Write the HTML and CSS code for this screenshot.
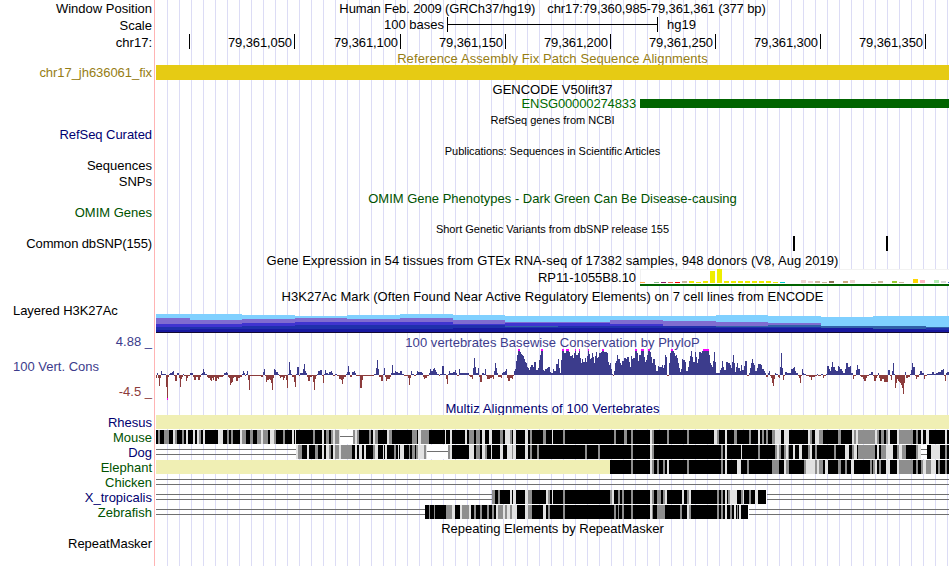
FILE: index.html
```html
<!DOCTYPE html>
<html lang="en">
<head>
<meta charset="utf-8">
<title>Human chr17:79,360,985-79,361,361</title>
<link rel="stylesheet" href="styles.css">
</head>
<body>
<main class="browser">
  <div class="row h17"><span class="label">Window Position</span><div class="track title position"><span>Human Feb. 2009 (GRCh37/hg19)</span><span>chr17:79,360,985-79,361,361 (377 bp)</span></div></div>
  <div class="row h17"><span class="label">Scale</span><div class="track scale"><span>100 bases</span><i class="ruler"></i><span>hg19</span></div></div>
  <div class="row h17"><span class="label">chr17:</span><div class="track ticks"><span class="tick first"></span><span class="tick">79,361,050</span><span class="tick wide">79,361,100</span><span class="tick">79,361,150</span><span class="tick">79,361,200</span><span class="tick">79,361,250</span><span class="tick">79,361,300</span><span class="tick">79,361,350</span></div></div>
  <div class="row h14 gold"><div class="track title wider">Reference Assembly Fix Patch Sequence Alignments</div></div>
  <div class="row h15 gold"><span class="label tight">chr17_jh636061_fix</span><div class="track fill-gold"></div></div>
  <div class="row h18"><div class="track title">GENCODE V50lift37</div></div>
  <div class="row h11 green"><div class="track gene"><span class="tighter">ENSG00000274833</span><i class="gene-bar"></i></div></div>
  <div class="row h15 after-gene"><div class="track title small">RefSeq genes from NCBI</div></div>
  <div class="row h13 navy"><span class="label tight">RefSeq Curated</span></div>
  <div class="row h18 lowered"><div class="track title small tight">Publications: Sequences in Scientific Articles</div></div>
  <div class="row h13"><span class="label">Sequences</span></div>
  <div class="row h19"><span class="label">SNPs</span></div>
  <div class="row h15 omim"><div class="track title">OMIM Gene Phenotypes - Dark Green Can Be Disease-causing</div></div>
  <div class="row h13 omim"><span class="label">OMIM Genes</span></div>
  <div class="row h17 lowered"><div class="track title small">Short Genetic Variants from dbSNP release 155</div></div>
  <div class="row h15"><span class="label tighter">Common dbSNP(155)</span><div class="track"><svg viewBox="0 0 793 15"><path d="M637 0h2v15h-2zM730 0h2v15h-2z"/></svg></div></div>
  <div class="row h18"><div class="track title wide-text">Gene Expression in 54 tissues from GTEx RNA-seq of 17382 samples, 948 donors (V8, Aug 2019)</div></div>
  <div class="row h17"><div class="track gene"><span class="tight">RP11-1055B8.10</span><svg id="gtex" class="gtex" viewBox="0 0 309 17"></svg></div></div>
  <div class="row h18 lowered"><div class="track title wide-text">H3K27Ac Mark (Often Found Near Active Regulatory Elements) on 7 cell lines from ENCODE</div></div>
  <div class="row h29"><span class="label left tight">Layered H3K27Ac</span><div class="track"><svg id="histone" viewBox="0 0 793 29"></svg></div></div>
  <div class="row h16 cons"><span class="label">4.88 _</span><div class="track title lowered wide-text">100 vertebrates Basewise Conservation by PhyloP</div></div>
  <div class="row h52 cons"><div class="label stack"><span class="name">100 Vert. Cons</span><span class="low">-4.5 _</span></div><div class="track"><svg id="phylop" viewBox="0 147 2379 156"></svg></div></div>
  <div class="row h14 navy"><div class="track title wider">Multiz Alignments of 100 Vertebrates</div></div>
  <div id="species"></div>
  <div class="row h17"><div class="track title">Repeating Elements by RepeatMasker</div></div>
  <div class="row h12"><span class="label tight">RepeatMasker</span></div>
</main>
<script src="tracks.js"></script>
</body>
</html>
```
FILE: styles.css
```css
* { box-sizing: border-box; }
body { margin: 0; background: #fff; }
.browser {
  width: 949px; height: 566px; overflow: hidden;
  font: 13px/15px "Liberation Sans", Arial, sans-serif; color: #000;
  background:
    linear-gradient(#ffb4b4, #ffb4b4) 154px 0 / 1px 100% no-repeat,
    repeating-linear-gradient(to right, #dcdcf5 0 1px, transparent 1px 12px) 167px 0 no-repeat;
}
.row { display: grid; grid-template-columns: 152px 793px; grid-template-rows: 100%; column-gap: 4px; align-items: center; white-space: nowrap; }
.label { grid-column: 1; justify-self: end; }
.label.left { justify-self: start; margin-left: 13px; align-self: start; line-height: 13px; }
.track { grid-column: 2; height: 100%; min-width: 0; }
.title { display: flex; justify-content: center; align-items: center; }
.small { font-size: 11px; }
.tight { letter-spacing: -0.05px; }
.tighter { letter-spacing: -0.13px; }
.wide-text { letter-spacing: 0.05px; }
.wider { letter-spacing: 0.09px; }
.h11 { height: 11px; }
.h12 { height: 12px; }
.h13 { height: 13px; }
.h14 { height: 14px; }
.h15 { height: 15px; }
.h16 { height: 16px; }
.h17 { height: 17px; }
.h18 { height: 18px; }
.h19 { height: 19px; }
.h29 { height: 29px; }
.h52 { height: 52px; }
.after-gene { margin-top: 4px; }
.lowered { padding-top: 3px; }
.gold { color: #967d14; }
.green { color: #006a00; }
.omim { color: #005200; }
.navy { color: #000070; }
.cons { color: #3c3c8c; }
.fill-gold { background: #e6cb14; }
.position { gap: 12px; letter-spacing: -0.12px; }
.scale { display: flex; align-items: flex-start; padding-left: 228px; }
.ruler { width: 211px; height: 15px; margin: 0 9px 0 3px; border: solid #000; border-width: 0 1px; background: linear-gradient(#000, #000) 0 7px / 100% 1px no-repeat; }
.ticks { display: flex; align-items: flex-start; }
.tick { width: 105px; height: 15px; border-right: 1px solid #000; text-align: right; padding-right: 2px; line-height: 17px; letter-spacing: -0.1px; }
.tick.first { width: 34px; }
.tick.wide { width: 106px; }
.gene { display: flex; align-items: center; }
.gene span { width: 480px; margin-right: 4px; text-align: right; }
.gene-bar { width: 309px; height: 9px; background: #006400; }
svg { display: block; width: 100%; height: 100%; shape-rendering: crispEdges; }
.gtex { width: 309px; flex: none; }
.stack { justify-self: stretch; height: 100%; display: flex; flex-direction: column; justify-content: space-between; padding: 10px 0 2px; }
.name { margin-left: 13px; }
.low { text-align: right; color: #8c3c3c; }
.axis { fill: #707070; }
.gray { fill: #8e8e8e; }
.light { fill: #e2e2e2; }
.cream { fill: #f0efb4; }
.blank { fill: #fff; }
```
FILE: tracks.js
```js
const rect = (x, y, w, h, paint) => `<rect x="${x}" y="${y}" width="${w}" height="${h}" ${paint}/>`;
const put = (id, markup) => { document.getElementById(id).innerHTML = markup; };

// Tissue expression: offset, height, colour
const Y = '#eeee00';
const tissues = [[0,1,'#ffa54f'],[14,1,'#8fbc8f'],[21,1,'#8b1c62'],[28,1,'#ee6a50'],[35,1,'#ff0000'],[42,2,'#cdb79e'],
  [49,2,Y],[56,1,Y],[63,2,Y],[70,12,Y],[77,14,Y],[84,2,Y],[91,2,Y],[98,2,Y],[105,2,Y],[112,2,Y],[119,2,Y],[126,2,Y],[133,1,Y],
  [140,1,'#00cdcd'],[161,3,'#eed5d2'],[168,2,'#eed5d2'],[175,2,'#cdb79e'],[182,1,'#cdb79e'],[189,2,'#8b7355'],
  [203,2,'#cdaa7d'],[210,3,'#eed5d2'],[231,1,'#cdb79e'],[238,2,'#cdb79e'],[252,2,'#9acd32'],[259,1,'#cdb79e'],
  [273,4,'#ffd700'],[280,3,'#ffb6c1'],[294,3,'#b4eeb4'],[301,2,'#d9d9d9'],[308,1,'#3a5fcd']];
put('gtex', rect(0, 0, 309, 15, 'fill="#fff"') + rect(0, 0, 309, 1, 'fill="#f2f2f2"') + rect(0, 0, 1, 15, 'fill="#f2f2f2"') +
  tissues.map(([x, h, c]) => rect(x, 14 - h, 5, h, `fill="${c}"`)).join('') + rect(0, 15, 309, 2, 'fill="#006400"'));

// Layered marks: segment end, then top of each layer
const layerColors = ['#80d0ff', '#806cd0', '#4034d0', '#3060a8', '#2030ac', '#1818a0'];
const marks = [
  [34,10,14,20,23,23,26],[86,10,16,20,23,23,25],[139,11,15,19,22,22,25],[191,12,14,18,21,21,25],[244,11,15,18,21,21,25],
  [297,10,14,18,21,21,25],[349,11,16,20,21,21,24],[402,12,18,19,22,23,24],[454,12,18,19,22,22,24],[507,12,16,20,22,22,24],
  [560,12,17,22,22,22,24],[612,11,18,22,22,23,24],[665,12,19,21,21,23,24],[717,13,22,22,22,24,24],[770,12,22,22,22,25,25],[793,12,23,23,23,24,26]];
let left = 0;
put('histone', marks.map(([end, ...tops]) => {
  const s = tops.map((t, i) => rect(left, t, end - left, 28 - t, `fill="${layerColors[i]}"`)).join('');
  left = end;
  return s;
}).join('') + rect(0, 28, 793, 1, 'fill="#140a32"'));

// Conservation scores: "position:score", each value holds until the next position
const scores = [
[-18, '18:-10 21:5 24:-10 27:-33 30:-10 33:12 36:3 48:-35 51:-72 54:-6 57:4 60:5 66:8 69:12 72:-3 75:-17 81:5 87:-10 90:-36 93:-12 96:-5 99:3 102:-3 108:-17 111:-8 114:-3 120:6 129:-6 132:-14 138:-6 144:-14 150:-6 153:3 156:6 159:18 162:10 165:4 168:3 171:-5 174:-9 180:-14 183:-18 186:-10 189:-14 192:-6 195:-18 201:-10 204:-12 207:-6 219:-3 222:6 228:9 231:5 234:-5 237:-10 240:-30 243:-23 246:-20 249:-10 252:-6 258:-18 264:-8 270:-5 276:4 279:12 282:5 285:-3 288:4 291:12 294:-15 297:-45 300:-3 333:-5 339:8 342:18 345:-3 348:-20 351:-14 354:-16 357:-12 360:-14 363:-24 366:-45 369:-10 372:18 375:15 378:8 384:3 387:-3 390:-8 393:-6 399:-15 402:-8 405:-3 408:-15 411:-39 414:4 417:39 420:15 423:2 426:-6 432:-20 435:-35 438:4 441:24 447:-3 450:5 456:5 459:18 462:33 465:12 468:6 471:-6 474:-18 480:-6 486:-3 489:-20 492:-45 495:-12 498:-4 501:4 504:12 510:15 516:-3 519:-24 522:2 525:15 528:5 534:3 537:10 543:12 546:5 549:-3 555:2 561:-3 567:-12 573:-14 576:-27 579:-12 582:-6 588:4 591:9 594:27 597:10 600:-5 605:9 612:12 615:6 618:-3 630:-39 636:-14 639:-3 672:4 678:20 681:45 684:18 687:-6 693:-18 699:3 702:22 705:-6 708:-18 711:-12 720:-6 723:6 726:30 729:6 735:12 738:8 744:6 750:12 756:3 762:-3 774:-9 777:-30 780:0'],
[762, '0:-8 3:12 6:3 12:-3 18:4 21:12 24:9 36:5 39:-6 42:-12 45:-8 51:-4 57:6 60:18 63:12 69:18 72:21 75:15 78:10 81:4 87:-3 90:4 96:27 102:4 108:-12 111:-27 114:4 117:12 120:6 129:9 135:15 138:6 141:-4 147:18 150:5 156:6 177:-3 180:-6 186:-12 189:20 192:51 195:24 198:5 204:20 207:-5 210:-21 216:5 222:4 225:18 228:-4 231:-12 240:-8 246:-6 249:-12 252:12 255:36 258:22 261:6 264:-6 273:-9 276:5 279:8 285:12 288:18 291:-8 294:-18 300:-10 306:-12 309:-3 312:12 315:18 318:42 321:60 324:77 330:69 333:62 336:60 339:57 342:48 345:40 348:35 351:24 354:20 357:15 360:24 363:30 369:24 372:39 378:15 384:20 387:45 390:60 393:77 399:15 402:12 405:18 411:22 414:24 420:10 423:6 429:18 432:12 438:33 444:48 447:20 450:6 453:45 456:77 462:66 468:77 477:69 480:57 486:60 489:50 492:66 495:77 498:60 504:66 507:77 510:50 513:36 516:48 519:39 525:51 528:39 531:57 534:77 537:62 540:48 543:51 546:66 549:54 552:36 555:57 558:69 561:50 564:54 567:66 573:69 576:77 582:69 591:66 594:39 597:30 600:36 603:18 606:4 609:-3 612:12 615:36 618:42 621:60 624:48 630:36 633:30 636:42 642:50 648:48 651:54 657:39 660:24 663:57 666:48 669:50 675:77 681:66 684:42 687:60 693:77 702:54 705:39 708:45 711:60 714:77 720:69 723:54 726:36 729:48 735:30 738:12 744:27 747:24 756:30 759:20 762:30 765:60 768:54 771:-3 776:36 779:66 783:77 789:72 792:66 795:57 798:60 801:51 804:36 807:20 810:0'],
[1572, '0:10 3:18 6:48 9:45 15:39 18:12 24:24 27:42 30:57 33:72 36:54 39:39 45:69 48:54 51:36 54:48 57:69 63:66 66:72 69:77 87:60 90:36 93:30 96:24 99:42 102:69 105:39 108:6 114:5 120:15 123:20 126:42 129:24 132:15 138:39 144:36 150:30 153:20 156:39 159:60 162:36 165:10 168:24 171:36 174:20 180:12 183:30 186:15 192:27 195:42 201:-3 207:6 210:20 213:36 216:48 219:36 222:30 225:12 231:20 234:33 243:30 246:18 252:12 255:5 258:-6 264:5 267:12 270:-4 273:-10 276:-24 279:-33 282:-12 285:5 288:3 294:-6 297:-9 300:24 303:67 306:20 309:-14 312:-4 315:9 321:5 327:6 333:18 339:20 342:24 345:12 348:5 354:-3 357:-9 360:-24 363:-3 366:18 369:6 372:4 378:-3 387:-6 393:-14 396:-6 405:-3 411:3 414:-4 423:3 429:-9 432:-3 438:3 441:27 447:18 450:12 453:24 456:39 459:24 465:15 468:12 474:27 477:24 480:18 486:12 489:6 495:18 498:36 504:24 510:27 513:6 519:-12 522:-3 528:15 531:30 534:18 540:-3 543:-6 549:-12 552:-18 558:-8 561:-3 567:3 573:10 579:-3 582:-18 588:-8 591:-4 594:6 597:-9 600:-18 606:-12 612:-20 624:15 630:-4 633:-14 636:12 639:36 642:4 645:-39 648:-24 651:-12 654:-18 657:-20 660:-24 663:-30 666:-39 669:-56 672:-24 675:9 678:-10 684:-6 690:4 693:15 696:36 699:24 705:-4 708:-12 711:-6 717:3 720:12 726:5 732:-12 735:-4 741:3 756:8 762:4 768:6 774:10 783:15 789:18 792:-4 795:-18 798:5 801:8 807:0']];
const BASE = 225;
put('phylop', scores.map(([shift, text]) => {
  const steps = text.split(' ').map(s => s.split(':').map(Number));
  return steps.slice(0, -1).map(([x, v], i) => {
    const w = steps[i + 1][0] - x, at = x + shift;
    if (v < 0) return rect(at, BASE, w, -v, 'fill="#8c3c3c"') + (v <= -72 ? rect(at, BASE + 69, w, 6, 'fill="#f0f"') : '');
    const h = Math.max(v, 3);
    return rect(at, BASE - h, w, h, 'fill="#3c3c8c"') + (v > 76 ? rect(at, 147, w, 6, 'fill="#f0f"') : '');
  }).join('');
}).join(''));

// Alignments: spans of aligned sequence, then lighter bases (g = weak, w = weakest)
const A = -18, B = 762, C = 1572;
const species = [
  { name: 'Rhesus', color: 'navy', cream: [0, 2379] },
  { name: 'Mouse', color: 'omim', blocks: [[0, 2379]], gaps: [[552, 39, 1]], bases: [
    [A, '24-30g 42-57g 69-75w 75-81g 96-102g 108-114w 129-135w 141-147w 147-153g 159-165w 204-219w 231-237g 243-249g 270-276w 276-288g 300-309g 321-333g 333-339w 339-354g 360-372w 372-378g 399-405g 426-432w 435-438w 489-495g 516-522w 528-537g 543-549g 549-555w 555-567g 567-570w 609-615g 615-621w 621-627g 657-663g 669-675w 675-684g 711-717w 717-726g 795-801g'],
    [B, '6-15g 24-33w 33-57g 105-108w 120-126w 165-171w 177-192g 198-210g 216-225w 237-246w 270-279g 285-300w 300-306g 309-318w 345-354w 360-366g 399-408g 426-429w 459-465g 612-618g 642-651g 663-669g 720-726w 726-732g 771-777g'],
    [C, '21-27g 102-111w 111-117g 135-141w 162-171g 207-213g 234-240w 246-252g 258-264g 276-285g 285-303w 312-327w 384-390w 390-396g 405-417w 417-429g 474-483g 516-522w 522-528g 528-534w 534-585g 585-591w 591-597g 603-612g 618-624g 624-630w 651-657w 657-699g 708-714g 723-729w 738-747w 795-801w']] },
  { name: 'Dog', color: 'navy', blocks: [[420, 1959]], lines: [[0, 420]], gaps: [[813, 63, 1], [2295, 18, 2]], bases: [
    [A, '438-444w 444-456g 471-477w 495-504g 516-522w 528-537w 537-543g 549-555w 555-567g 567-573w 573-606g 615-621w 627-636w 642-648w 669-675g 675-684w 699-702w 705-711w 732-738g 744-747w 750-762w 777-780g 786-795g 804-810w'],
    [B, '6-15g 18-24g 24-42w 42-48g 48-51w 114-120g 120-126w 177-192w 198-210g 216-225w 225-231g 243-246w 270-279w 291-306w 306-309g 309-318w 345-354w 360-366g 381-387g 525-531g 564-570g 663-669g 720-726w 726-732g'],
    [C, '123-129g 135-141w 183-186w 234-240g 285-291g 291-297w 297-303g 312-318g 318-324w 324-327g 339-345w 357-366w 384-390g 390-396w 405-411g 462-468g 495-507w 516-522g 522-528w 528-531w 534-585g 591-597w 603-618g 618-639w 651-657g 657-666w 666-678g 708-714g 714-723w 753-780w 795-801g']] },
  { name: 'Elephant', color: 'omim', cream: [0, 1362], blocks: [[1362, 1017]], bases: [
    [B, '663-669g 720-726w 726-732g 741-747g 759-765g 771-777w'],
    [C, '21-27g 123-129g 135-141w 171-183w 201-207g 276-297g 312-318w 318-327g 372-378g 378-405w 405-411g 411-417w 417-429g 435-444w 474-483g 495-501g 513-522w 570-576g 579-585g 585-591w 597-603g 618-630w 651-657w 657-699g 708-714g 723-729g 729-738w 738-753g 753-768w 774-780g 795-801g']] },
  { name: 'Chicken', color: 'omim', lines: [[0, 2379]] },
  { name: 'X_tropicalis', color: 'navy', lines: [[0, 1008], [1833, 546]], blocks: [[1008, 822]], bases: [
    [B, '246-254g 264-270g 300-306w 309-318w 345-354w 354-366g 408-414w 414-420g 426-429w 459-465g 600-606g 606-612w 624-630g 636-642g 663-669g 720-726w 726-732g 741-753g 759-765g 765-771w'],
    [C, '6-12w 21-27g 27-33w 111-117g 123-129g 135-141w 144-150g 150-171w 183-189g 189-192w 207-213g 225-234w']] },
  { name: 'Zebrafish', color: 'omim', lines: [[0, 807], [1779, 600]], blocks: [[807, 969]], bases: [
    [B, '57-60g 72-75g 108-126g 126-135w 150-156w 156-159g 159-177g 177-183w 192-198g 210-216g 231-237g 246-252g 258-264w 264-279g 279-285w 285-291g 291-300w 300-306g 306-321w 345-354w 354-366g 399-408w 414-420g 459-465g 612-618g 624-627g 636-642g 663-669g 720-726w 726-729g 741-765g'],
    [C, '0-6g 21-27w 27-33g 111-117g 123-129g 135-141w 150-156g 162-168w 171-174g 177-183w']] }];
const doubleLine = (x, w) => rect(x, 12, w, 3, 'class="axis"') + rect(x, 27, w, 3, 'class="axis"');
const drawSpecies = s => {
  let out = '';
  if (s.cream) out += rect(s.cream[0], 0, s.cream[1], 42, 'class="cream"');
  (s.lines || []).forEach(([x, w]) => { out += doubleLine(x, w); });
  (s.blocks || []).forEach(([x, w]) => { out += rect(x, 0, w, 42, ''); });
  (s.bases || []).forEach(([shift, text]) => text.split(' ').forEach(b => {
    const [, from, to, kind] = b.match(/(\d+)-(\d+)(\w)/);
    out += rect(+from + shift, 0, to - from, 42, `class="${kind === 'g' ? 'gray' : 'light'}"`);
  }));
  (s.gaps || []).forEach(([x, w, n]) => {
    out += rect(x, 0, w, 42, 'class="blank"');
    out += n === 1 ? rect(x, 18, w, 3, 'class="axis"') : doubleLine(x, w);
  });
  return `<div class="row h15 ${s.color}"><span class="label">${s.name}</span><div class="track"><svg viewBox="0 0 2379 45">${out}</svg></div></div>`;
};
put('species', species.map(drawSpecies).join(''));
```
